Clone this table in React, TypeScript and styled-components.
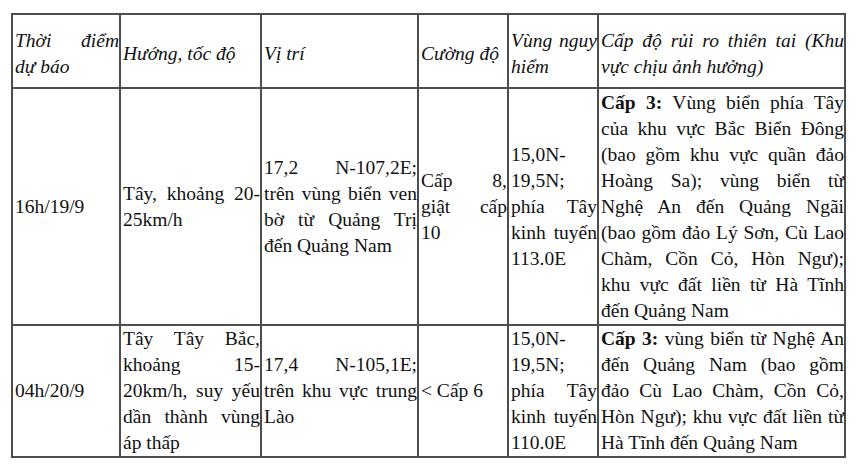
import React from "react";
import styled, { createGlobalStyle } from "styled-components";

const GlobalStyle = createGlobalStyle`
  html, body { margin: 0; padding: 0; background: #ffffff; }
  body { font-family: "Liberation Serif", "Times New Roman", serif; color: #111111; }
`;

const Page = styled.div`
  padding: 13px 0 0 11px;
`;

const Table = styled.table`
  border-collapse: collapse;
  table-layout: fixed;
  width: 833px;
  font-size: 19.5px;
  line-height: 26px;
`;

const Row = styled.tr<{ $h: number }>`
  height: ${(p) => p.$h}px;
`;

const HeadCell = styled.th`
  border: 2px solid #4d4d4d;
  padding: 6px 0 0 2px;
  vertical-align: middle;
  text-align: left;
  font-style: italic;
  font-weight: normal;
`;

const Cell = styled.td`
  border: 2px solid #4d4d4d;
  padding: 0 0 0 2px;
  vertical-align: middle;
  text-align: left;
`;

const Line = styled.span<{ $fill?: boolean }>`
  display: block;
  white-space: nowrap;
  text-align: ${(p) => (p.$fill ? "justify" : "left")};
  text-align-last: ${(p) => (p.$fill ? "justify" : "left")};
`;

const Strong = styled.b`
  font-weight: bold;
`;

type Content = React.ReactNode[];

const Lines = ({ lines }: { lines: Content }) => (
  <>
    {lines.map((l, i) => (
      <Line key={i} $fill={i < lines.length - 1}>
        {l}
      </Line>
    ))}
  </>
);

const widths = [108, 141, 157, 90, 90, 247];

const header: Content[] = [
  ["Thời điểm", "dự báo"],
  ["Hướng, tốc độ"],
  ["Vị trí"],
  ["Cường độ"],
  ["Vùng nguy", "hiểm"],
  ["Cấp độ rủi ro thiên tai (Khu", "vực chịu ảnh hưởng)"],
];

const rows: { h: number; cells: Content[] }[] = [
  {
    h: 237,
    cells: [
      ["16h/19/9"],
      ["Tây, khoảng 20-", "25km/h"],
      ["17,2 N-107,2E;", "trên vùng biển ven", "bờ từ Quảng Trị", "đến Quảng Nam"],
      ["Cấp 8,", "giật cấp", "10"],
      ["15,0N-", "19,5N;", "phía Tây", "kinh tuyến", "113.0E"],
      [
        <>
          <Strong>Cấp 3:</Strong> Vùng biển phía Tây
        </>,
        "của khu vực Bắc Biển Đông",
        "(bao gồm khu vực quần đảo",
        "Hoàng Sa); vùng biển từ",
        "Nghệ An đến Quảng Ngãi",
        "(bao gồm đảo Lý Sơn, Cù Lao",
        "Chàm, Cồn Cỏ, Hòn Ngư);",
        "khu vực đất liền từ Hà Tĩnh",
        "đến Quảng Nam",
      ],
    ],
  },
  {
    h: 132,
    cells: [
      ["04h/20/9"],
      ["Tây Tây Bắc,", "khoảng 15-", "20km/h, suy yếu", "dần thành vùng", "áp thấp"],
      ["17,4 N-105,1E;", "trên khu vực trung", "Lào"],
      ["< Cấp 6"],
      ["15,0N-", "19,5N;", "phía Tây", "kinh tuyến", "110.0E"],
      [
        <>
          <Strong>Cấp 3:</Strong> vùng biển từ Nghệ An
        </>,
        "đến Quảng Nam (bao gồm",
        "đảo Cù Lao Chàm, Cồn Cỏ,",
        "Hòn Ngư); khu vực đất liền từ",
        "Hà Tĩnh đến Quảng Nam",
      ],
    ],
  },
];

export default function App() {
  return (
    <>
      <GlobalStyle />
      <Page>
        <Table>
          <colgroup>
            {widths.map((w, i) => (
              <col key={i} style={{ width: w }} />
            ))}
          </colgroup>
          <thead>
            <Row $h={74}>
              {header.map((c, i) => (
                <HeadCell key={i}>
                  <Lines lines={c} />
                </HeadCell>
              ))}
            </Row>
          </thead>
          <tbody>
            {rows.map((r, ri) => (
              <Row key={ri} $h={r.h}>
                {r.cells.map((c, ci) => (
                  <Cell key={ci}>
                    <Lines lines={c} />
                  </Cell>
                ))}
              </Row>
            ))}
          </tbody>
        </Table>
      </Page>
    </>
  );
}
